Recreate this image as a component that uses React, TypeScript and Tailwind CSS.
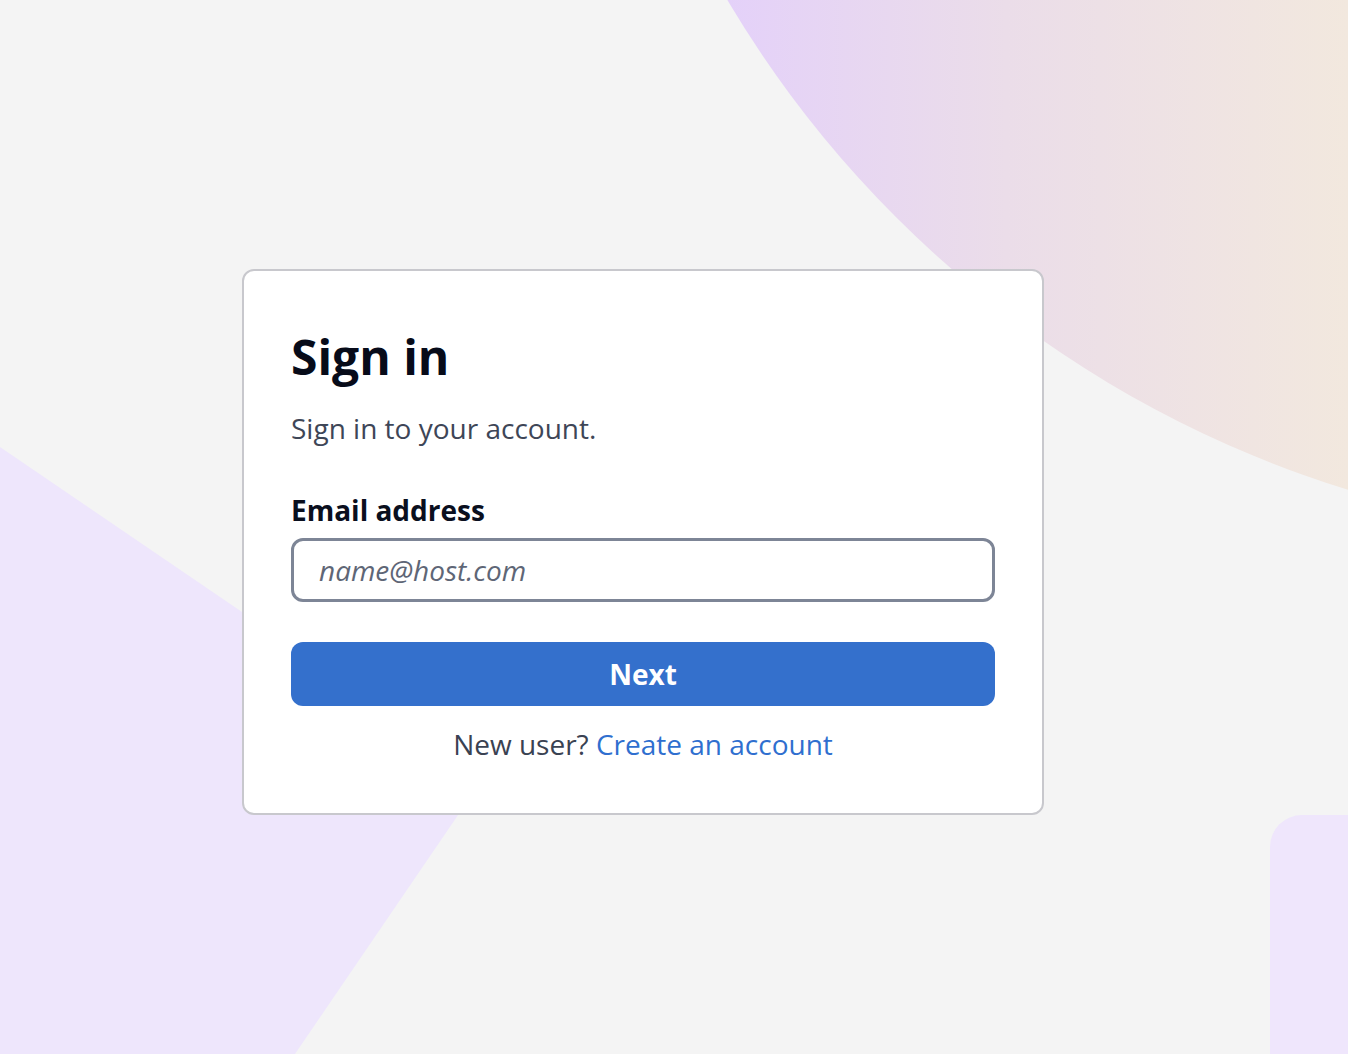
import React from "react";

const Backdrop = () => (
  <svg
    className="absolute inset-0 w-full h-full"
    viewBox="0 0 1348 1054"
    preserveAspectRatio="none"
    aria-hidden="true"
  >
    <defs>
      <linearGradient id="arc" gradientUnits="userSpaceOnUse" x1="727" y1="0" x2="1348" y2="0">
        <stop offset="0" stopColor="#e4d1f9" />
        <stop offset="0.45" stopColor="#ebdde9" />
        <stop offset="1" stopColor="#f2e8de" />
      </linearGradient>
    </defs>
    <circle cx="1673" cy="-560" r="1099" fill="url(#arc)" />
    <polygon points="0,447 484,777 295,1054 0,1054" fill="#eee6fc" />
    <path d="M1270 1054 V847 a32 32 0 0 1 32 -32 H1348 V1054 Z" fill="#efe6fc" />
  </svg>
);

export default function App() {
  return (
    <div
      className="relative h-[1054px] w-full overflow-hidden bg-[#f4f4f4] flex items-center justify-center pr-[62px] pt-[30px]"
      style={{ fontFamily: '"Open Sans", "Noto Sans", sans-serif' }}
    >
      <Backdrop />

      {/* Sign in card */}
      <div className="relative w-[802px] bg-white border-2 border-[#c8c8cd] rounded-[12px] px-[47px] pt-[57px] pb-[50px]">
        <h1 className="text-[48px] leading-[58px] font-bold text-[#070b19]">Sign in</h1>
        <p className="mt-[23px] text-[28px] leading-[38px] text-[#3e4657]">
          Sign in to your account.
        </p>

        <label className="block mt-[44px] text-[28px] leading-[38px] font-bold text-[#0a0f1e]">
          Email address
        </label>
        <input
          type="email"
          placeholder="name@host.com"
          className="mt-[9px] block w-full h-[64px] border-[3px] border-[#7d8596] rounded-[12px] px-[25px] text-[28px] italic text-[#1f2937] placeholder:text-[#5e6676] outline-none bg-white"
        />

        <button className="mt-[40px] w-full h-[64px] rounded-[12px] bg-[#3470cc] text-white text-[28px] font-bold">
          Next
        </button>

        <p className="mt-[19px] text-center text-[28px] leading-[38px] text-[#3a4252]">
          New user?{" "}
          <a href="#" className="text-[#2f6fcf]">
            Create an account
          </a>
        </p>
      </div>
    </div>
  );
}
